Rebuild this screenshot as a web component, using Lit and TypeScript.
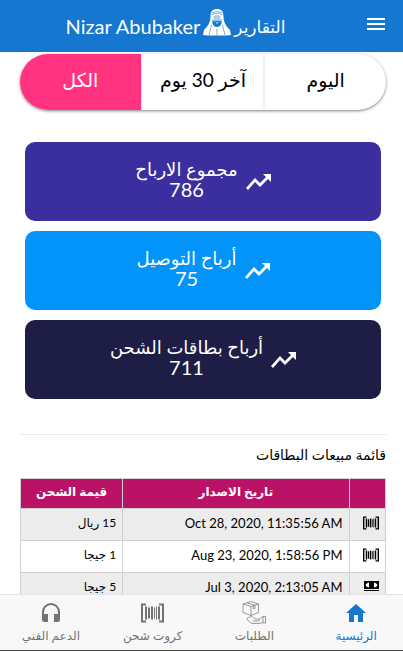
import { LitElement, html, svg, css } from "lit";
import { customElement, state } from "lit/decorators.js";
import { classMap } from "lit/directives/class-map.js";

const barcode = svg`<path d="M0 0h5v2H2v15h3v2H0zM23 0h-5v2h3v15h-3v2h5zM4 3h2v13H4zM7 4h2v11H7zM10 3h2v13h-2zM13 4h1v11h-1zM15 3h1v13h-1zM17 3h2v13h-2z"/>`;

const tabs = ["اليوم", "آخر 30 يوم", "الكل"];

const cards = [
  { title: "مجموع الارباح", value: 786, tone: "violet" },
  { title: "أرباح التوصيل", value: 75, tone: "blue" },
  { title: "أرباح بطاقات الشحن", value: 711, tone: "navy" },
];

const sales = [
  { kind: "card", date: "Oct 28, 2020, 11:35:56 AM", amount: "15 ريال" },
  { kind: "card", date: "Aug 23, 2020, 1:58:56 PM", amount: "1 جيجا" },
  { kind: "cash", date: "Jul 3, 2020, 2:13:05 AM", amount: "5 جيجا" },
];

const nav = [
  {
    label: "الرئيسية",
    icon: html`<svg viewBox="0 0 24 24" width="24" height="24"><path fill="currentColor" d="M10 21v-7h4v7h5v-9h3L12 3 2 12h3v9z"/></svg>`,
  },
  {
    label: "الطلبات",
    icon: html`<svg viewBox="0 0 24 24" width="24" height="24" fill="none" stroke="currentColor" stroke-width=".7"><path d="M1 3l8-2.500L16.500 3v8.500L9 14.500l-8-3zM1 3l8 2.500L16.500 3M9 5.500v9M5 1.800l8 2.500v3l-1.500.5V4.800"/><path d="M5 17.500c3-2.500 6-2.500 8 .5h3c2 0 2 2 0 2h-5M17 18.500l3-2.500h1M5 17.500c1 2 3 5 6 5h6l4-1M21 15.500h2.500V22H21z"/></svg>`,
  },
  {
    label: "كروت شحن",
    icon: html`<svg viewBox="0 0 23 19" width="23" height="24" fill="currentColor">${barcode}</svg>`,
  },
  {
    label: "الدعم الفني",
    icon: html`<svg viewBox="0 0 24 24" width="24" height="24"><path fill="currentColor" d="M12 2a9 9 0 0 0-9 9v7.500A2.500 2.500 0 0 0 5.500 21H9v-8H5v-2a7 7 0 0 1 14 0v2h-4v8h3.500a2.500 2.500 0 0 0 2.500-2.500V11a9 9 0 0 0-9-9z"/></svg>`,
  },
];

@customElement("app-root")
export class AppRoot extends LitElement {
  @state() private tab = 2;

  static styles = css`
    :host {
      display: flex;
      flex-direction: column;
      box-sizing: border-box;
      height: 100vh;
      overflow: hidden;
      direction: rtl;
      background: #fff;
      color: #000;
      font-family: Lato, "DejaVu Sans", sans-serif;
      font-size: 13px;
      border-bottom: 1px solid #444;
    }
    svg {
      display: block;
      flex: none;
    }
    button {
      font: inherit;
      color: inherit;
      background: none;
      border: 0;
      padding: 0;
      cursor: pointer;
    }
    .bar {
      display: flex;
      align-items: center;
      flex: none;
      height: 52px;
      background: #1577cf;
      color: #fff;
    }
    .menu {
      padding: 0 18px 4px 16px;
    }
    .title {
      flex: 1;
      display: flex;
      justify-content: center;
      align-items: center;
      gap: 3px;
      margin: 0;
      font-size: 17px;
      font-weight: 400;
      white-space: nowrap;
    }
    .title svg {
      margin-bottom: 8px;
    }
    .title bdi {
      font-size: 20px;
    }
    .content {
      flex: 1;
      min-height: 0;
      overflow: hidden;
      padding: 2px 17px 0 20px;
    }
    .tabs {
      display: flex;
      height: 56px;
      border-radius: 28px;
      overflow: hidden;
      box-shadow: 0 1px 3px rgba(0, 0, 0, 0.5);
    }
    .tab {
      flex: 1;
      font-size: 19px;
      padding-bottom: 6px;
      white-space: nowrap;
      border-inline-end: 2px solid #f0f0f0;
    }
    .tab.on {
      background: #ff3380;
      color: #fff;
      border: 0;
    }
    .cards {
      display: flex;
      flex-direction: column;
      gap: 10px;
      padding: 32px 5px 35px;
    }
    .card {
      display: flex;
      justify-content: center;
      align-items: center;
      gap: 8px;
      height: 79px;
      border-radius: 10px;
      color: #fff;
      text-align: center;
      font-size: 18px;
      line-height: 20px;
    }
    .figures {
      padding-bottom: 6px;
    }
    .value {
      font-size: 20px;
    }
    .violet {
      background: #3b2e9e;
    }
    .blue {
      background: #0294f9;
    }
    .navy {
      background: #1d1d45;
    }
    .caption {
      margin: 0;
      border-top: 1px solid #ececec;
      padding: 10px 0 13px;
      font-size: 14px;
      font-weight: 400;
      line-height: 20px;
    }
    .sales {
      width: 100%;
      table-layout: fixed;
      border-collapse: collapse;
    }
    .c-icon {
      width: 10%;
    }
    .c-amount {
      width: 28%;
    }
    th,
    td {
      box-sizing: border-box;
      border: 1px solid #d0d0d0;
      padding: 0 6px 4px;
      height: 32px;
      text-align: start;
      white-space: nowrap;
    }
    th {
      height: 30px;
      background: #b91267;
      color: #fff;
      font-size: 12px;
      text-align: center;
    }
    tbody tr:nth-child(odd) {
      background: #ececec;
    }
    .amount {
      font-size: 12px;
    }
    bdi {
      direction: ltr;
    }
    .nav {
      display: grid;
      grid-template-columns: repeat(4, 1fr);
      flex: none;
      height: 56px;
      margin-inline-start: -4px;
      background: #f8f8f8;
      border-top: 1px solid #e4e4e4;
      box-sizing: border-box;
    }
    .link {
      display: flex;
      flex-direction: column;
      align-items: center;
      padding-top: 6px;
      gap: 1px;
      color: #737373;
      text-decoration: none;
      font-size: 12px;
      line-height: 20px;
      white-space: nowrap;
    }
    .link.on {
      color: #1577cf;
    }
  `;

  render() {
    return html`
      <header class="bar">
        <button class="menu" aria-label="القائمة">
          <svg viewBox="0 0 18 12" width="18" height="12" fill="#fff"><path d="M0 0h18v2H0zM0 5h18v2H0zM0 10h18v2H0z"/></svg>
        </button>
        <h1 class="title">
          <span>التقارير</span>
          <svg viewBox="0 0 28 27" width="28" height="27">
            <path fill="#fff" d="M14 0C8 0 7.500 4 7.500 8c0 5-2.500 9-6.500 13l-1 5 5 .5h18l5-.5-1-5c-4-4-6.500-8-6.500-13 0-4-.5-8-6.500-8z"/>
            <path fill="#a9cdee" d="M10.500 7q3.500-2 7 0v6h-7z"/>
            <path fill="#1577cf" d="M9.500 10l1.500 2.500q3-1.500 6 0l1.500-2.500v4.500q-1.500 3.500-4.500 3.500t-4.500-3.500z"/>
            <path fill="#fff" d="M12.300 13.500h3.400q-1.700 1.800-3.400 0z"/>
            <path d="M8.500 3.800q5.500-2.500 11 0M8.500 5.500q5.500-2.500 11 0M8.500 16L6 26M19.500 16L22 26M14 20v6" fill="none" stroke="#1577cf" stroke-width=".6"/>
          </svg>
          <bdi>Nizar Abubaker</bdi>
        </h1>
      </header>

      <main class="content">
        <div class="tabs">
          ${tabs.map(
            (t, i) => html`<button
              class=${classMap({ tab: true, on: i === this.tab })}
              aria-pressed=${i === this.tab}
              @click=${() => (this.tab = i)}
            >${t}</button>`
          )}
        </div>

        <section class="cards">
          ${cards.map(
            (c) => html`<div class="card ${c.tone}">
              <svg viewBox="0 0 25 16" width="25" height="16"><path fill="#fff" d="M17 0l3 3-6 6-5-5-9 10 2 2 7-8 5 5 8-8 3 3V0z"/></svg>
              <div class="figures"><div>${c.title}</div><div class="value">${c.value}</div></div>
            </div>`
          )}
        </section>

        <h2 class="caption">قائمة مبيعات البطاقات</h2>
        <table class="sales">
          <colgroup><col class="c-icon" /><col /><col class="c-amount" /></colgroup>
          <thead>
            <tr><th></th><th>تاريخ الاصدار</th><th>قيمة الشحن</th></tr>
          </thead>
          <tbody>
            ${sales.map(
              (s) => html`<tr>
                <td>
                  ${s.kind === "card"
                    ? html`<svg viewBox="0 0 23 19" width="16" height="14">${barcode}</svg>`
                    : html`<svg viewBox="0 0 15 11" width="15" height="11"><path d="M0 0h15v8H0zM0 9h15v1H0z"/><path fill="#fff" d="M5 1.500v5Q2 6 1.500 4 2 2 5 1.500zM10 1.500v5q3-.5 3.500-2.500Q13 2 10 1.500z"/></svg>`}
                </td>
                <td><bdi>${s.date}</bdi></td>
                <td class="amount">${s.amount}</td>
              </tr>`
            )}
          </tbody>
        </table>
      </main>

      <nav class="nav">
        ${nav.map(
          (n, i) => html`<a href="#" class=${classMap({ link: true, on: i === 0 })}>${n.icon}<span>${n.label}</span></a>`
        )}
      </nav>
    `;
  }
}
